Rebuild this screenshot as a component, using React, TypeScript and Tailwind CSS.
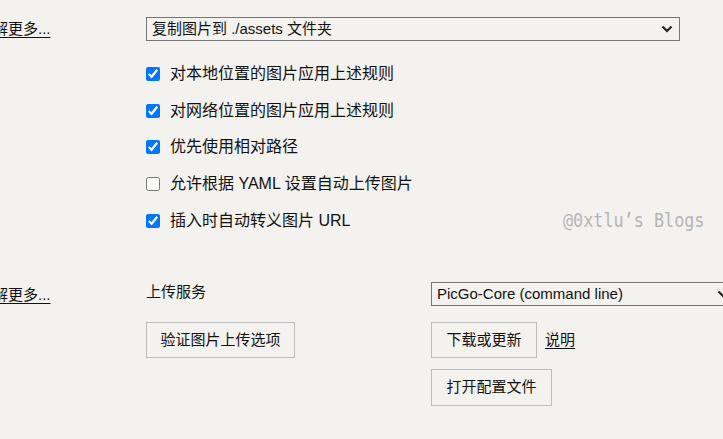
import React from "react";

const font = { fontFamily: '"Liberation Sans", "Noto Sans CJK SC", sans-serif' };

function Chevron() {
  return (
    <svg width="12" height="8" viewBox="0 0 12 8" className="pointer-events-none absolute right-[7px] top-1/2 -translate-y-1/2">
      <polyline points="1.5,1.5 6,6 10.5,1.5" fill="none" stroke="#222" strokeWidth="2.2" />
    </svg>
  );
}

function Select({ value, w }: { value: string; w: string }) {
  return (
    <div className={`relative h-[24px] shrink-0 ${w}`}>
      <select
        defaultValue={value}
        className="h-full w-full appearance-none border border-[#767676] bg-transparent pl-[5px] text-[15px] leading-[22px] text-[#111] outline-none"
        style={font}
      >
        <option value={value}>{value}</option>
      </select>
      <Chevron />
    </div>
  );
}

function Check({ label, checked }: { label: string; checked: boolean }) {
  return (
    <label className="flex h-[36.6px] items-center">
      <input type="checkbox" defaultChecked={checked} className="m-0 h-[14px] w-[14px] accent-[#0075ff]" />
      <span className="ml-[10px] text-[16px] text-[#111]">{label}</span>
    </label>
  );
}

function Btn({ label, w }: { label: string; w: string }) {
  return (
    <button className={`flex items-center justify-center border border-[#bcbcbc] bg-transparent text-[15px] text-[#111] ${w}`} style={font}>
      {label}
    </button>
  );
}

function Link() {
  return (
    <div className="w-[146px] shrink-0 overflow-hidden">
      <a className="-ml-[22px] block whitespace-nowrap text-[15px] text-[#111] underline underline-offset-[3px]">了解更多...</a>
    </div>
  );
}

export default function App() {
  return (
    <div className="relative h-[439px] w-[723px] overflow-hidden bg-[#f3f2ef]" style={font}>
      <div className="flex items-center pt-[17px]">
        <Link />
        <Select value="复制图片到 ./assets 文件夹" w="w-[534px]" />
      </div>
      <div className="ml-[146px] mt-[15px] flex flex-col">
        <Check label="对本地位置的图片应用上述规则" checked />
        <Check label="对网络位置的图片应用上述规则" checked />
        <Check label="优先使用相对路径" checked />
        <Check label="允许根据 YAML 设置自动上传图片" checked={false} />
        <Check label="插入时自动转义图片 URL" checked />
      </div>
      <div className="mt-[43px] flex items-start">
        <div className="flex h-[24px] items-center pt-[3px]">
          <Link />
        </div>
        <div className="flex w-[285px] shrink-0 flex-col">
          <div className="flex h-[24px] items-center pb-[3px] text-[15px] text-[#111]">上传服务</div>
          <div className="mt-[16px] flex">
            <Btn label="验证图片上传选项" w="h-[36px] w-[149px]" />
          </div>
        </div>
        <div className="flex flex-col">
          <Select value="PicGo-Core (command line)" w="w-[305px]" />
          <div className="mt-[16px] flex items-center">
            <Btn label="下载或更新" w="h-[36px] w-[106px]" />
            <a className="ml-[8px] text-[15px] text-[#111] underline underline-offset-[3px]">说明</a>
          </div>
          <div className="mt-[11px] flex">
            <Btn label="打开配置文件" w="h-[37px] w-[121px]" />
          </div>
        </div>
      </div>
      <div
        className="pointer-events-none absolute left-[563px] top-[208px] origin-center scale-y-[1.2] whitespace-nowrap text-[16.8px] text-[#b5b5b5]"
        style={{ fontFamily: '"DejaVu Sans Mono", monospace' }}
      >
        @0xtlu’s Blogs
      </div>
    </div>
  );
}
